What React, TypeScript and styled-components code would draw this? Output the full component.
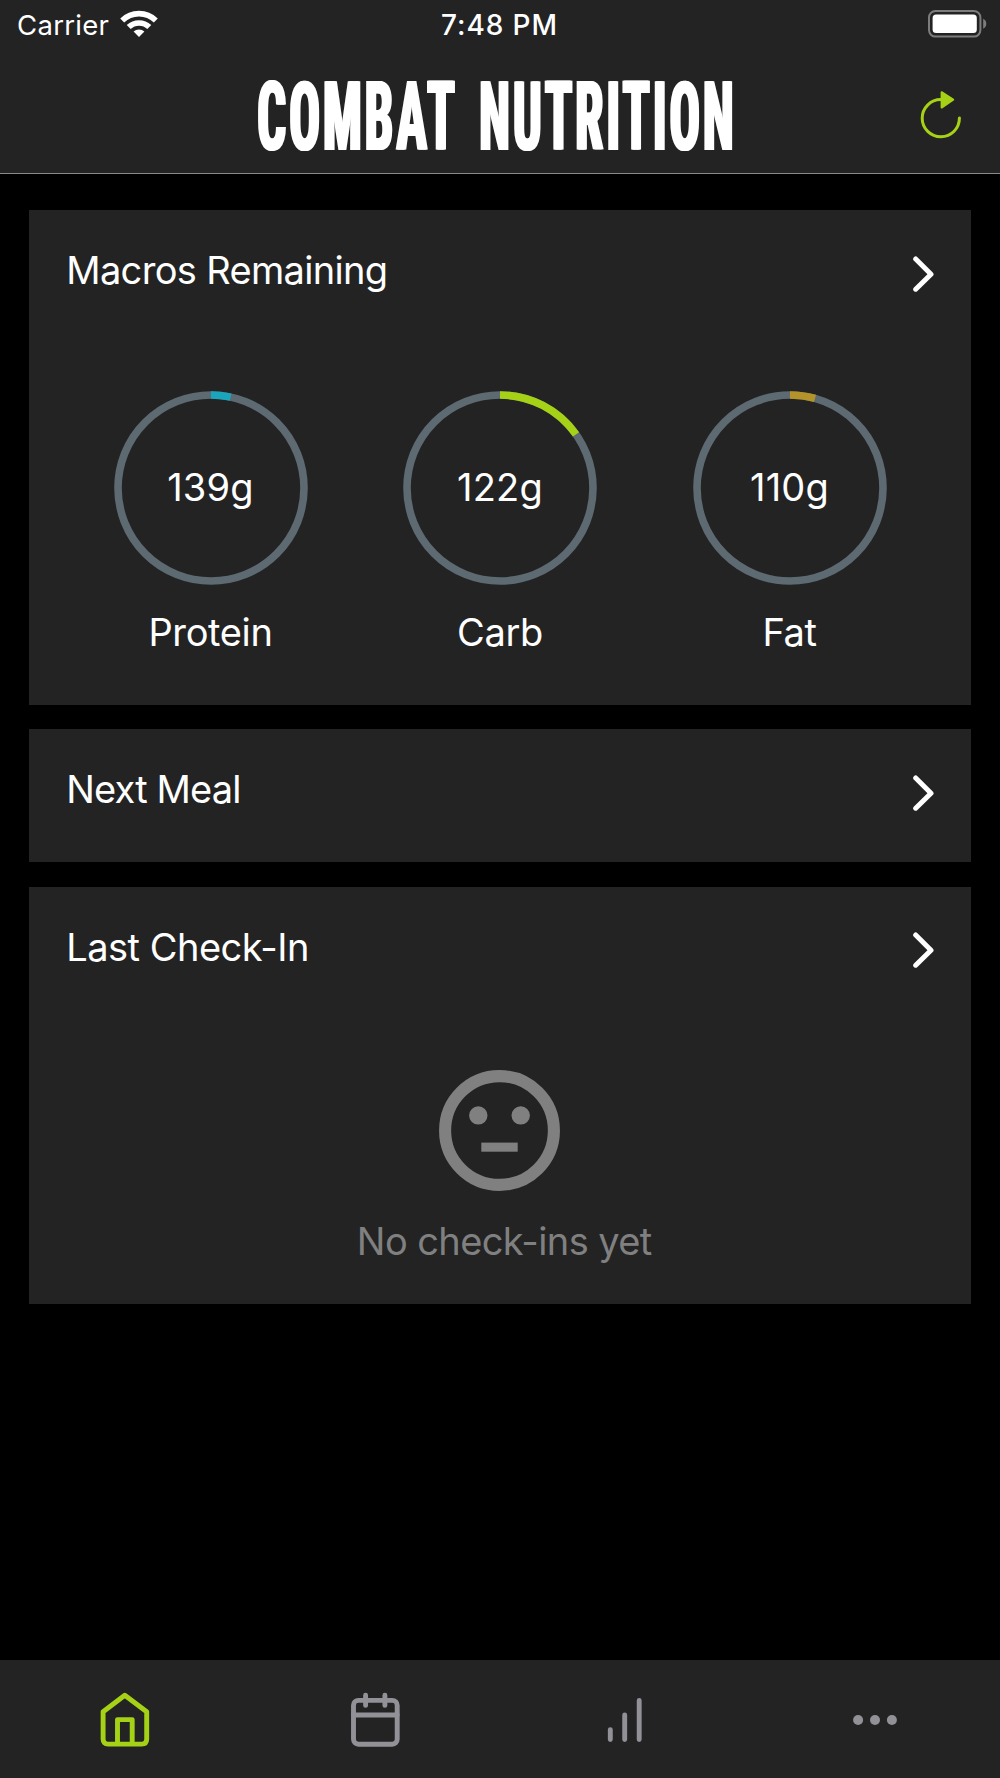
import React from "react";
import styled, { createGlobalStyle } from "styled-components";

const colors = {
  surface: "#232323",
  lime: "#a5d216",
  cyan: "#1aa5bd",
  gold: "#b4932b",
  track: "#5d6a71",
  muted: "#808080",
  tab: "#929197",
};

const GlobalStyle = createGlobalStyle`
  *, *::before, *::after { box-sizing: border-box; }
  body { margin: 0; background: #000; }
`;

const Screen = styled.div`
  display: flex;
  flex-direction: column;
  width: 1000px;
  height: 1778px;
  overflow: hidden;
  background: #000;
  color: #fff;
  font-family: Inter, "Liberation Sans", sans-serif;
  font-size: 38px;
`;

const Header = styled.header`
  height: 174px;
  flex: none;
  background: ${colors.surface};
  border-bottom: 1px solid #8a8a8a;
`;

const StatusBar = styled.div`
  display: grid;
  grid-template-columns: 1fr auto 1fr;
  align-items: center;
  height: 51px;
  padding: 0 13px 0 16px;
  font-size: 28px;
  line-height: 51px;
`;

const Carrier = styled.div`
  display: flex;
  align-items: center;
  gap: 10.5px;
  padding-left: 1px;
  font-size: 27.5px;
  letter-spacing: 0.3px;

  svg { margin-top: -4px; }
`;

const Clock = styled.div`
  padding-right: 4px;
  font-weight: 500;
  letter-spacing: 0.9px;
`;

const BatterySlot = styled.div`
  display: flex;
  justify-content: flex-end;
  margin-top: -4px;
`;

const NavBar = styled.div`
  display: grid;
  grid-template-columns: 257px 1fr auto;
  height: 122px;
  padding-right: 36px;
`;

const Wordmark = styled.h1`
  grid-column: 2;
  display: flex;
  gap: 24px;
  margin: 0;
  padding-top: 16px;
  font-family: Roboto, "Liberation Sans", sans-serif;
  font-size: 95.6px;
  font-weight: 800;
  font-stretch: 75%;
  line-height: 100px;
`;

const Word = styled.span<{ $width: number; $scale: number }>`
  width: ${(p) => p.$width}px;
  white-space: nowrap;
  letter-spacing: 5px;
  text-shadow: 2px 0 #fff, -2px 0 #fff;
  transform: scaleX(${(p) => p.$scale});
  transform-origin: 0 50%;
`;

const RefreshButton = styled.button`
  grid-column: 3;
  width: 46px;
  height: 54px;
  margin-top: 36px;
  padding: 0;
  border: 0;
  background: none;
`;

const Cards = styled.main`
  flex: 1;
  display: flex;
  flex-direction: column;
  gap: 24.5px;
  padding: 36px 29px 0;
`;

const Card = styled.section<{ $height: number }>`
  height: ${(p) => p.$height}px;
  background: ${colors.surface};
`;

const CardHeader = styled.div`
  display: flex;
  justify-content: space-between;
  align-items: flex-start;
  padding: 37px 37.2px 0 37.3px;

  svg { margin-top: 0.8px; }
`;

const CardTitle = styled.h2<{ $tracking: number }>`
  margin: 0;
  font-size: 38px;
  font-weight: 400;
  line-height: 46px;
  letter-spacing: ${(p) => p.$tracking}px;
`;

const Macros = styled.div`
  display: grid;
  grid-template-columns: repeat(3, 289.5px);
  justify-content: center;
  padding-top: 91.2px;
`;

const Macro = styled.div`
  display: flex;
  flex-direction: column;
  align-items: center;
`;

const Gauge = styled.div`
  display: grid;
  place-items: center;
  width: 194px;
  height: 194px;

  > * { grid-area: 1 / 1; }
`;

const GaugeValue = styled.span`
  padding-bottom: 2px;
  line-height: 46px;
  letter-spacing: 0.2px;
`;

const MacroName = styled.span`
  margin-top: 24px;
  line-height: 46px;
  letter-spacing: -0.35px;
`;

const Empty = styled.div`
  display: flex;
  flex-direction: column;
  align-items: center;
  padding: 93.7px 1.5px 0 0;
  color: ${colors.muted};
`;

const EmptyText = styled.p`
  margin: 27px 0 0 10px;
  line-height: 46px;
  letter-spacing: -0.6px;
`;

const TabBar = styled.nav`
  display: grid;
  grid-template-columns: repeat(4, 1fr);
  flex: none;
  height: 118px;
  padding-top: 30px;
  background: ${colors.surface};
`;

const Tab = styled.button<{ $active?: boolean }>`
  display: flex;
  justify-content: center;
  align-items: flex-start;
  padding: 0;
  border: 0;
  background: none;
  color: ${(p) => (p.$active ? colors.lime : colors.tab)};
`;

const WifiIcon = () => (
  <svg width="38" height="29" viewBox="0 0 38 29">
    <g fill="none" stroke="#fff" strokeWidth="5.6">
      <path d="M2.2 11.5a24 24 0 0 1 33.6 0" />
      <path d="M8.7 18.1a14.8 14.8 0 0 1 20.6 0" />
    </g>
    <path fill="#fff" d="M19 28l-5.4-5.4a7.7 7.7 0 0 1 10.8 0z" />
  </svg>
);

const BatteryIcon = () => (
  <svg width="59" height="28" viewBox="0 0 59 28">
    <rect x="1" y="1" width="51.4" height="25.6" rx="6.5" fill="none" stroke="#7d7d7d" strokeWidth="2" />
    <rect x="4.6" y="4.6" width="44.2" height="18.4" rx="3.5" fill="#fff" />
    <path d="M55.2 8.8a5.6 5.6 0 0 1 0 10z" fill="#7d7d7d" />
  </svg>
);

const RefreshIcon = () => (
  <svg width="46" height="54" viewBox="0 0 46 54">
    <path d="M41.4 31A18.6 18.6 0 1 1 22.8 12.6h3" fill="none" stroke={colors.lime} strokeWidth="3" strokeLinecap="round" />
    <path d="M23.6 5.2v15.4l11.6-7.9z" fill={colors.lime} stroke={colors.lime} strokeWidth="2" strokeLinejoin="round" />
  </svg>
);

const ChevronIcon = () => (
  <svg width="24" height="52" viewBox="0 0 24 52">
    <path d="M5.7 11L21 26.2 5.7 41.2" fill="none" stroke="#fff" strokeWidth="5" strokeLinecap="round" strokeLinejoin="round" />
  </svg>
);

const FaceIcon = () => (
  <svg width="121" height="121" viewBox="-60.5 -60.5 121 121" fill="currentColor">
    <circle r="54.4" fill="none" stroke="currentColor" strokeWidth="12.1" />
    <circle cx="-21.2" cy="-15.1" r="9.2" />
    <circle cx="21.2" cy="-15.1" r="9.2" />
    <rect x="-18.2" y="12.1" width="36.4" height="9.1" />
  </svg>
);

const HomeIcon = () => (
  <svg width="60" height="60" viewBox="0 0 60 60" fill="none" stroke="currentColor" strokeWidth="4.9" strokeLinejoin="round">
    <path d="M8.1 21.8L29.8 5.2l21.9 16.6v27.3q0 5-5 5H13.1q-5 0-5-5z" />
    <path d="M22.5 54V29.6h14.7V54" />
  </svg>
);

const CalendarIcon = () => (
  <svg width="60" height="60" viewBox="0 0 60 60" fill="none" stroke="currentColor" strokeWidth="4.9" strokeLinecap="round">
    <rect x="8.5" y="10.4" width="43.7" height="43.8" rx="4.9" />
    <path d="M8.5 25h43.7M20.6 5.2v10.2M39.9 5.2v10.2" />
  </svg>
);

const ChartIcon = () => (
  <svg width="60" height="60" viewBox="0 0 60 60" stroke="currentColor" strokeWidth="4.9" strokeLinecap="round">
    <path d="M15.3 39.6v10M29.7 25v24.6M44.2 10.5v39.1" />
  </svg>
);

const MoreIcon = () => (
  <svg width="60" height="60" viewBox="0 0 60 60" fill="currentColor">
    <circle cx="13.1" cy="30" r="5" />
    <circle cx="30" cy="30" r="5" />
    <circle cx="46.9" cy="30" r="5" />
  </svg>
);

function Ring({ degrees, color }: { degrees: number; color: string }) {
  const r = 93;
  const a = (degrees * Math.PI) / 180;
  return (
    <svg width="194" height="194" viewBox="-97 -97 194 194" fill="none" strokeWidth="7.6">
      <circle r={r} stroke={colors.track} />
      <path d={`M0 ${-r}A${r} ${r} 0 0 1 ${r * Math.sin(a)} ${-r * Math.cos(a)}`} stroke={color} />
    </svg>
  );
}

const macros = [
  { name: "Protein", value: "139g", degrees: 12.2, color: colors.cyan },
  { name: "Carb", value: "122g", degrees: 54.8, color: colors.lime },
  { name: "Fat", value: "110g", degrees: 15.6, color: colors.gold },
];

function TitleRow({ tracking, children }: { tracking: number; children: React.ReactNode }) {
  return (
    <CardHeader>
      <CardTitle $tracking={tracking}>{children}</CardTitle>
      <ChevronIcon />
    </CardHeader>
  );
}

export default function App() {
  return (
    <Screen>
      <GlobalStyle />
      <Header>
        <StatusBar>
          <Carrier>
            <span>Carrier</span>
            <WifiIcon />
          </Carrier>
          <Clock>7:48 PM</Clock>
          <BatterySlot>
            <BatteryIcon />
          </BatterySlot>
        </StatusBar>
        <NavBar>
          <Wordmark>
            <Word $width={198} $scale={0.538}>COMBAT</Word>
            <Word $width={253} $scale={0.532}>NUTRITION</Word>
          </Wordmark>
          <RefreshButton aria-label="Refresh">
            <RefreshIcon />
          </RefreshButton>
        </NavBar>
      </Header>

      <Cards>
        <Card $height={494.5}>
          <TitleRow tracking={-0.67}>Macros Remaining</TitleRow>
          <Macros>
            {macros.map((m) => (
              <Macro key={m.name}>
                <Gauge>
                  <Ring degrees={m.degrees} color={m.color} />
                  <GaugeValue>{m.value}</GaugeValue>
                </Gauge>
                <MacroName>{m.name}</MacroName>
              </Macro>
            ))}
          </Macros>
        </Card>
        <Card $height={133}>
          <TitleRow tracking={-0.85}>Next Meal</TitleRow>
        </Card>
        <Card $height={417}>
          <TitleRow tracking={-0.52}>Last Check-In</TitleRow>
          <Empty>
            <FaceIcon />
            <EmptyText>No check-ins yet</EmptyText>
          </Empty>
        </Card>
      </Cards>

      <TabBar>
        <Tab $active aria-label="Home">
          <HomeIcon />
        </Tab>
        <Tab aria-label="Calendar">
          <CalendarIcon />
        </Tab>
        <Tab aria-label="Progress">
          <ChartIcon />
        </Tab>
        <Tab aria-label="More">
          <MoreIcon />
        </Tab>
      </TabBar>
    </Screen>
  );
}
